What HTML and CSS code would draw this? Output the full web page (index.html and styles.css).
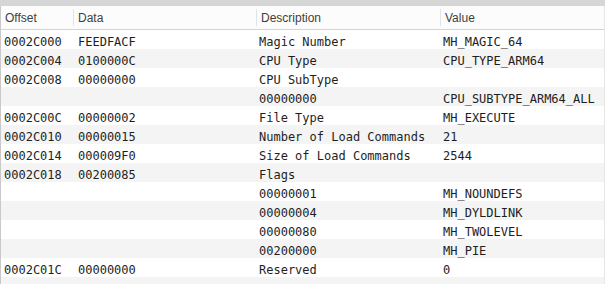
FILE: index.html
```html
<!DOCTYPE html>
<html lang="en">
<head>
    <meta charset="UTF-8">
    <meta name="viewport" content="width=device-width, initial-scale=1.0">
    <title>Mach Header</title>
    <link rel="stylesheet" href="styles.css">
</head>
<body>

    <div class="toolbar"></div>

    <div class="viewer">
        <!-- Cabecera de columnas -->
        <div class="head">
            <div class="hcell first">Offset</div>
            <div class="hcell">Data</div>
            <div class="hcell">Description</div>
            <div class="hcell">Value</div>
        </div>

        <!-- Filas de la cabecera Mach-O -->
        <div class="rows">
            <div class="row"><span>0002C000</span><span>FEEDFACF</span><span>Magic Number</span><span>MH_MAGIC_64</span></div>
            <div class="row"><span>0002C004</span><span>0100000C</span><span>CPU Type</span><span>CPU_TYPE_ARM64</span></div>
            <div class="row"><span>0002C008</span><span>00000000</span><span>CPU SubType</span><span></span></div>
            <div class="row"><span></span><span></span><span>00000000</span><span>CPU_SUBTYPE_ARM64_ALL</span></div>
            <div class="row"><span>0002C00C</span><span>00000002</span><span>File Type</span><span>MH_EXECUTE</span></div>
            <div class="row"><span>0002C010</span><span>00000015</span><span>Number of Load Commands</span><span>21</span></div>
            <div class="row"><span>0002C014</span><span>000009F0</span><span>Size of Load Commands</span><span>2544</span></div>
            <div class="row"><span>0002C018</span><span>00200085</span><span>Flags</span><span></span></div>
            <div class="row"><span></span><span></span><span>00000001</span><span>MH_NOUNDEFS</span></div>
            <div class="row"><span></span><span></span><span>00000004</span><span>MH_DYLDLINK</span></div>
            <div class="row"><span></span><span></span><span>00000080</span><span>MH_TWOLEVEL</span></div>
            <div class="row"><span></span><span></span><span>00200000</span><span>MH_PIE</span></div>
            <div class="row"><span>0002C01C</span><span>00000000</span><span>Reserved</span><span>0</span></div>
            <div class="row"><span></span><span></span><span></span><span></span></div>
        </div>
    </div>

</body>
</html>
```

FILE: styles.css
```css
* {
    margin: 0;
    padding: 0;
    box-sizing: border-box;
}

html, body {
    height: 100%;
    background: #fff;
    overflow: hidden;
}

/* Barra gris superior */
.toolbar {
    height: 6px;
    background: #d6d6d6;
}

.viewer {
    height: calc(100% - 6px);
    border-left: 1px solid #c9c9c9;
    border-right: 1px solid #e6e6e6;
}

/* Cabecera */
.head {
    display: grid;
    grid-template-columns: 72px 183px 184px 1fr;
    height: 24px;
    border-bottom: 1px solid #d4d4d4;
    background: #fcfcfc;
    font-family: "Liberation Sans", Arial, sans-serif;
    font-size: 12px;
    color: #3e3e3e;
}

.hcell {
    display: flex;
    align-items: center;
    margin: 3px 0;
    padding-left: 4px;
    border-left: 1px solid #e3e3e3;
}

.hcell.first {
    border-left: none;
}

/* Filas */
.row {
    display: grid;
    grid-template-columns: 72px 183px 184px 1fr;
    height: 19px;
    padding-top: 6px;
    font-family: "DejaVu Sans Mono", monospace;
    font-size: 12px;
    line-height: 13px;
    color: #1e1e1e;
    white-space: nowrap;
}

.row:nth-child(even) {
    background: #f4f4f4;
}

.row span {
    padding-left: 3px;
}

.row span:nth-child(2) {
    padding-left: 5px;
}
```
